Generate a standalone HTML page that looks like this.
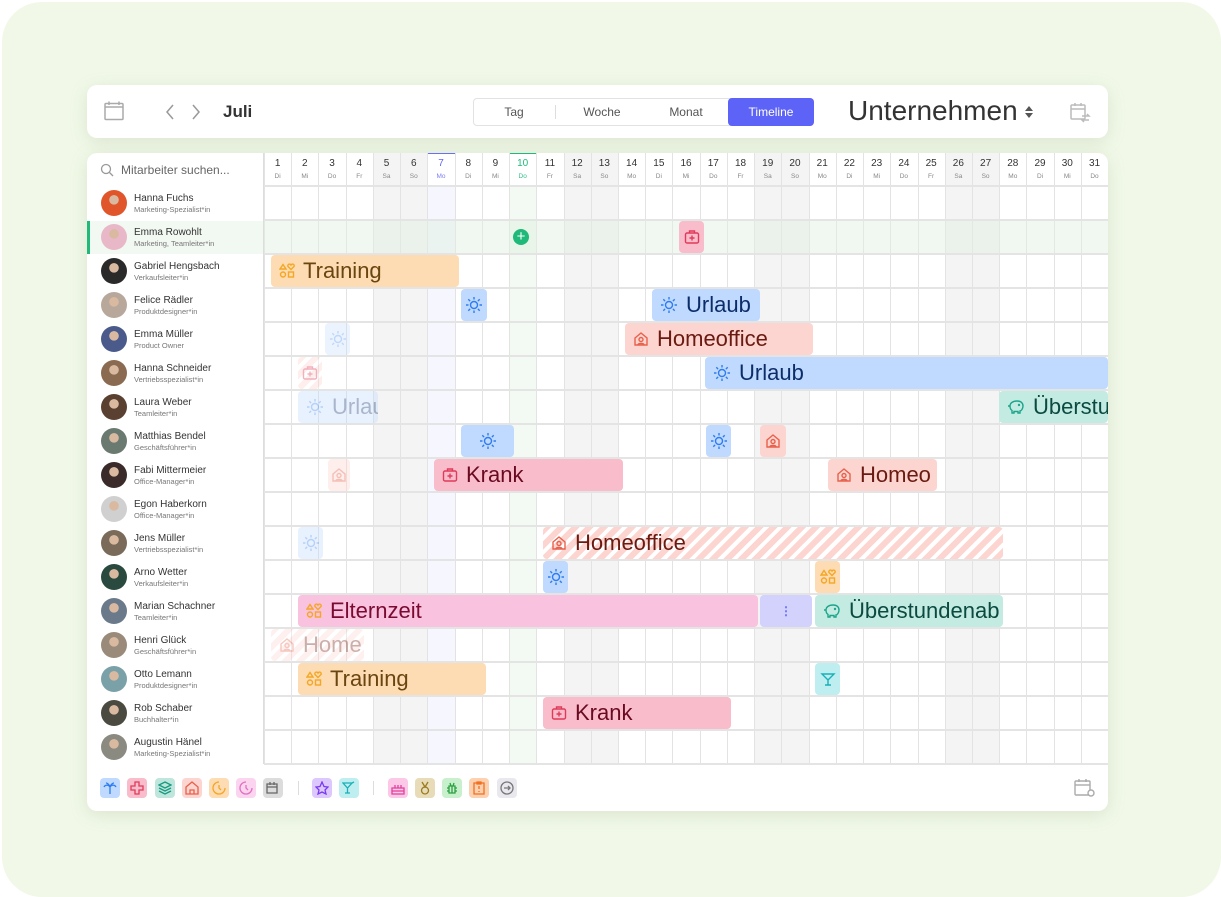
<!DOCTYPE html><html><head><meta charset="utf-8"><style>
*{margin:0;padding:0;box-sizing:border-box}
body{width:1221px;height:897px;background:#fff;font-family:"Liberation Sans",sans-serif;position:relative;overflow:hidden;color:#333}
.bgp{position:absolute;left:2px;top:2px;width:1219px;height:895px;background:#f1f8e8;border-radius:40px}
.card{position:absolute;background:#fff;border-radius:10px;box-shadow:0 4px 18px rgba(120,150,100,.18)}
.a{position:absolute}
.bar{position:absolute;border-radius:4px;overflow:hidden;white-space:nowrap;display:flex;align-items:center;font-size:22px;padding-left:8px}
.bar svg{flex:none;margin-right:8px}
.ic{position:absolute;border-radius:4px;display:flex;align-items:center;justify-content:center}
.nm{position:absolute;left:134px;font-size:10px;color:#333}
.rl{position:absolute;left:134px;font-size:7.5px;color:#777}
.av{position:absolute;left:101px;width:26px;height:26px;border-radius:50%}
.fi{position:absolute;top:778px;width:20px;height:20px;border-radius:4px;display:flex;align-items:center;justify-content:center}
</style></head><body>
<div class="bgp"></div>
<div class="card" style="left:87px;top:85px;width:1021px;height:53px"></div>
<svg class="a" style="left:103px;top:100px" width="22" height="22" viewBox="0 0 22 22" fill="none" stroke="#aaa" stroke-width="1.5"><rect x="2" y="3.5" width="18" height="16" rx="1"/><line x1="2" y1="7" x2="20" y2="7"/><line x1="6" y1="1.5" x2="6" y2="5"/><line x1="16" y1="1.5" x2="16" y2="5"/></svg>
<svg class="a" style="left:163px;top:104px" width="40" height="16" fill="none" stroke="#999" stroke-width="1.5"><path d="M10 1 L4 8 L10 15"/><path d="M30 1 L36 8 L30 15"/></svg>
<div class="a" style="left:223px;top:102px;font-size:17px;font-weight:bold;color:#333">Juli</div>
<div class="a" style="left:473px;top:98px;width:341px;height:28px;border:1px solid #e2e2e2;border-radius:4px;font-size:12px;color:#555">
<div class="a" style="left:0;width:80px;top:6px;text-align:center">Tag</div>
<div class="a" style="left:81px;top:6px;height:14px;border-left:1px solid #ddd"></div>
<div class="a" style="left:88px;width:80px;top:6px;text-align:center">Woche</div>
<div class="a" style="left:172px;width:80px;top:6px;text-align:center">Monat</div>
<div class="a" style="left:254px;top:-1px;width:86px;height:28px;background:#5e63f7;border-radius:4px;color:#fff;text-align:center;line-height:28px">Timeline</div></div>
<div class="a" style="left:848px;top:95px;font-size:28px;color:#333">Unternehmen</div>
<svg class="a" style="left:1024px;top:105px" width="10" height="14"><path d="M1 6 L5 1 L9 6Z M1 8 L5 13 L9 8Z" fill="#555"/></svg>
<svg class="a" style="left:1069px;top:101px" width="22" height="22" fill="none" stroke="#bbb" stroke-width="1.5"><rect x="2" y="4" width="14" height="14" rx="1"/><line x1="2" y1="8" x2="16" y2="8"/><line x1="6" y1="2" x2="6" y2="5"/><line x1="12" y1="2" x2="12" y2="5"/><path d="M13 15 h7 l-2 -2 M20 19 h-7 l2 2"/></svg>

<div class="card" style="left:87px;top:153px;width:1021px;height:658px"></div>
<svg class="a" style="left:100px;top:163px" width="14" height="14" fill="none" stroke="#999" stroke-width="1.3"><circle cx="6" cy="6" r="4.5"/><line x1="9.5" y1="9.5" x2="13" y2="13"/></svg>
<div class="a" style="left:121px;top:163px;font-size:12px;color:#666">Mitarbeiter suchen...</div>
<div class="a" style="left:87px;top:221px;width:177px;height:33px;background:#f2f8f2"></div>
<div class="a" style="left:87px;top:221px;width:3px;height:33px;background:#1fba7a"></div>
<div id="grid"></div>
<div id="people"></div>

<div id="bars"></div>
<div id="foot"></div>
<svg class="a" style="left:1073px;top:777px" width="24" height="22" fill="none" stroke="#aaa" stroke-width="1.4"><rect x="2" y="4" width="15" height="14" rx="1"/><line x1="2" y1="8" x2="17" y2="8"/><line x1="6" y1="2" x2="6" y2="5"/><line x1="13" y1="2" x2="13" y2="5"/><circle cx="18" cy="16" r="3" fill="#fff"/></svg>
<script>
const X0=264,W=27.23,Y0=186,RH=34;
let g='';
const wd=['Di','Mi','Do','Fr','Sa','So','Mo'];
for(let d=1;d<=31;d++){const x=X0+(d-1)*W;const w=wd[(d-1)%7];
 let bg=null;if(w=='Sa'||w=='So')bg='#f4f4f4';if(d==7)bg='#f5f6fe';if(d==10)bg='#f3f9f3';
 if(bg)g+=`<div class="a" style="left:${x}px;top:153px;width:${W}px;height:611px;background:${bg}"></div>`;
 if(d==7||d==10)g+=`<div class="a" style="left:${x}px;top:153px;width:${W}px;height:33px;background:#fff;border-top:1.5px solid ${d==7?'#6b6ff5':'#1fba7a'}"></div>`;
 g+=`<div class="a" style="left:${x}px;top:153px;width:1px;height:611px;background:#e3e3e3"></div>`;
 const c=d==7?'#5e63f7':d==10?'#1fba7a':'#333',c2=d==7?'#7b7ff7':d==10?'#2fc08a':'#888';
 g+=`<div class="a" style="left:${x}px;width:${W}px;top:158px;text-align:center;font-size:10px;color:${c}">${d}</div><div class="a" style="left:${x}px;width:${W}px;top:173px;text-align:center;font-size:6.5px;color:${c2}">${w}</div>`;}
g+=`<div class="a" style="left:264px;top:220px;width:844px;height:34px;background:rgba(225,240,225,.45)"></div>`;
for(let r=0;r<=17;r++)g+=`<div class="a" style="left:264px;top:${Y0+r*RH-1}px;width:844px;height:2px;background:#e4e4e4"></div>`;
g+=`<div class="a" style="left:263px;top:153px;width:1px;height:611px;background:#ddd"></div>`;
document.getElementById('grid').innerHTML=g;
const P=[['Hanna Fuchs','Marketing-Spezialist*in','#e0552a'],['Emma Rowohlt','Marketing, Teamleiter*in','#e8b8c8'],['Gabriel Hengsbach','Verkaufsleiter*in','#2a2a2a'],['Felice Rädler','Produktdesigner*in','#b8a89c'],['Emma Müller','Product Owner','#4a5a8a'],['Hanna Schneider','Vertriebsspezialist*in','#8a6a50'],['Laura Weber','Teamleiter*in','#5a4030'],['Matthias Bendel','Geschäftsführer*in','#6a7a70'],['Fabi Mittermeier','Office-Manager*in','#3a2a2a'],['Egon Haberkorn','Office-Manager*in','#d0d0d0'],['Jens Müller','Vertriebsspezialist*in','#7a6a5a'],['Arno Wetter','Verkaufsleiter*in','#2a4a40'],['Marian Schachner','Teamleiter*in','#6a7a8a'],['Henri Glück','Geschäftsführer*in','#9a8a7a'],['Otto Lemann','Produktdesigner*in','#7aa0a8'],['Rob Schaber','Buchhalter*in','#4a4a40'],['Augustin Hänel','Marketing-Spezialist*in','#8a8a80']];
let p='';P.forEach((q,i)=>{const y=Y0+i*RH;p+=`<div class="av" style="top:${y+4}px;background:radial-gradient(circle at 50% 38%,#d9b9a0 0 22%,${q[2]} 24%)"></div><div class="nm" style="top:${y+7}px">${q[0]}</div><div class="rl" style="top:${y+19}px">${q[1]}</div>`});
document.getElementById('people').innerHTML=p;
const ic={
sun:c=>`<svg width="18" height="18" viewBox="0 0 18 18" fill="none" stroke="${c}" stroke-width="1.4"><circle cx="9" cy="9" r="3.5"/><path d="M9 1v2.5M9 14.5V17M1 9h2.5M14.5 9H17M3.3 3.3l1.8 1.8M12.9 12.9l1.8 1.8M3.3 14.7l1.8-1.8M12.9 5.1l1.8-1.8"/></svg>`,
home:c=>`<svg width="16" height="16" viewBox="0 0 16 16" fill="none" stroke="${c}" stroke-width="1.4"><path d="M2 7 L8 2 L14 7 V14 H2Z"/><circle cx="8" cy="8.5" r="2"/><path d="M5 14c0-2 6-2 6 0"/></svg>`,
tr:c=>`<svg width="16" height="16" viewBox="0 0 16 16" fill="none" stroke="${c}" stroke-width="1.4"><path d="M4 1.5L7 6H1Z"/><path d="M12 6.5l-3-3a1.5 1.5 0 0 1 3-1.5a1.5 1.5 0 0 1 3 1.5Z"/><circle cx="4" cy="11.5" r="2.5"/><rect x="9.5" y="9" width="5" height="5"/></svg>`,
med:c=>`<svg width="16" height="16" viewBox="0 0 16 16" fill="none" stroke="${c}" stroke-width="1.4"><rect x="1.5" y="4" width="13" height="10" rx="1.5"/><path d="M5.5 4V2h5v2M8 6.5v5M5.5 9h5"/></svg>`,
pig:c=>`<svg width="18" height="16" viewBox="0 0 18 16" fill="none" stroke="${c}" stroke-width="1.4"><path d="M3 7c0-3 3-5 7-5s6 2 6 5-2 5-3 5v2h-2v-1.5H7V14H5v-2.5C3.5 10.5 3 9 3 7Z"/><path d="M3 7H1"/><circle cx="12" cy="6" r=".5"/></svg>`,
cock:c=>`<svg width="16" height="16" viewBox="0 0 16 16" fill="none" stroke="${c}" stroke-width="1.4"><path d="M2 3h12L8 9Z M8 9v5M5 14h6"/></svg>`};
const B=[
[1,679,704,'#f8bccb','',"med",'','#e03a5a'],
[2,271,459,'#fddcb3','#6b4510','tr','Training','#f5a623'],
[3,461,487,'#bfdafe','','sun','','#2f7cf0'],
[3,652,760,'#bfdafe','#0d2d6a','sun','Urlaub','#2f7cf0'],
[4,325,350,'#bfdafe','','sun','','#2f7cf0',.3],
[4,625,813,'#fdd5d0','#6a1a10','home','Homeoffice','#e8604a'],
[5,298,322,'#fdd5d0','','med','','#e03a5a',.4,1],
[5,705,1108,'#bfdafe','#0d2d6a','sun','Urlaub','#2f7cf0'],
[6,298,378,'#bfdafe','#0d2d6a','sun','Urlau','#2f7cf0',.35],
[6,999,1108,'#c4ebe2','#0a4a40','pig','Überstu','#1aa58a'],
[7,461,514,'#bfdafe','','sun','','#2f7cf0'],
[7,706,731,'#bfdafe','','sun','','#2f7cf0'],
[7,760,786,'#fdd5d0','','home','','#e8604a'],
[8,328,350,'#fdd5d0','','home','','#e8604a',.4],
[8,434,623,'#f8bccb','#6a0a20','med','Krank','#e03a5a'],
[8,828,937,'#fdd5d0','#6a1a10','home','Homeo','#e8604a'],
[10,298,323,'#bfdafe','','sun','','#2f7cf0',.35],
[10,543,1003,'#fdd5d0','#6a1a10','home','Homeoffice','#e8604a',1,1],
[11,543,568,'#bfdafe','','sun','','#2f7cf0'],
[11,815,840,'#fddcb3','','tr','','#f5a623'],
[12,298,758,'#f9c3df','#7a0a30','tr','Elternzeit','#f5a623'],
[12,760,812,'#d2d2fc','','','','#6b6ff5'],
[12,815,1003,'#c4ebe2','#0a4a40','pig','Überstundenab','#1aa58a'],
[13,271,364,'#fdd5d0','#6a1a10','home','Home','#e8604a',.35,1],
[14,298,486,'#fddcb3','#6b4510','tr','Training','#f5a623'],
[14,815,840,'#bfeef0','','cock','','#1ab0b8'],
[15,543,731,'#f8bccb','#6a0a20','med','Krank','#e03a5a']];
let b='';B.forEach(v=>{const [r,x1,x2,bg,fg,icn,t,icc,op,st]=v;const y=Y0+r*RH+1;
 const bgs=st?`repeating-linear-gradient(135deg,${bg} 0 6px,#fff0 6px 10px),#fff`:bg;
 let inner=icn?ic[icn](icc):`<span style="color:#6b6ff5;font-size:12px;font-weight:bold">⋮</span>`;
 if(t) b+=`<div class="bar" style="left:${x1}px;top:${y}px;width:${x2-x1}px;height:32px;background:${bgs};color:${fg};opacity:${op||1}">${inner}<span>${t}</span></div>`;
 else b+=`<div class="ic" style="left:${x1}px;top:${y}px;width:${x2-x1}px;height:32px;background:${bgs};opacity:${op||1}">${inner}</div>`;});
b+=`<div class="a" style="left:513px;top:229px;width:16px;height:16px;border-radius:50%;background:#1fba7a;color:#fff;font-size:15px;line-height:16px;text-align:center">+</div>`;
document.getElementById('bars').innerHTML=b;
const paths={
palm:'M7 13V6M7 6C5 3 2 4 1 6M7 6C9 3 12 4 13 6M7 6C6 3 4 2 3 2M7 6C8 3 10 2 11 2',
plus:'M5 1h4v4h4v4H9v4H5V9H1V5h4Z',
layers:'M7 1L13 4L7 7L1 4Z M1 7L7 10L13 7 M1 10L7 13L13 10',
home:'M1 6L7 1L13 6V13H1Z M5 13V9h4v4',
clock:'M7 1a6 6 0 1 0 6 6 M7 4v3l2 2',
cal:'M1 3h10v9H1Z M1 6h10 M4 1v3 M8 1v3',
star:'M7 1L9 5.5L13 6L10 9L11 13L7 11L3 13L4 9L1 6L5 5.5Z',
cock:'M1 2h9L5.5 7Z M5.5 7v5M3 12h5 M10 2l2-1',
cake:'M1 7h12v6H1Z M1 10h12 M4 4v3M7 4v3M10 4v3',
medal:'M4 1l3 5l3-5 M7 13a3.5 3.5 0 1 0 0-7a3.5 3.5 0 0 0 0 7',
bug:'M4 5h6v7H4Z M7 5V12 M2 7h2M10 7h2M2 10h2M10 10h2 M5 2l1 3M9 2l-1 3',
clip:'M2 2h10v11H2Z M5 1h4v2H5Z M7 5v3M7 10v1',
arrow:'M7 1a6 6 0 1 1 0 12a6 6 0 0 1 0-12 M4 7h6M8 5l2 2l-2 2'};
const F=[[100,'#bfdafe','#2f7cf0','palm'],[127,'#f8bccb','#e03a5a','plus'],[155,'#bfe6dc','#1a9a80','layers'],[182,'#fdd5d0','#e8604a','home'],[209,'#fddcb3','#f5a623','clock'],[236,'#fbd5ef','#e070c0','clock'],[263,'#dcdcdc','#666','cal'],[312,'#dcc8fc','#7a3af0','star'],[339,'#bfeef0','#1ab0b8','cock'],[388,'#fcc8e8','#e0409a','cake'],[415,'#e8dcb8','#9a7a20','medal'],[442,'#c8f0cc','#2aa040','bug'],[469,'#fdd0b0','#f07020','clip'],[497,'#e8e8ee','#777','arrow']];
let f='';F.forEach(q=>{f+=`<div class="fi" style="left:${q[0]}px;background:${q[1]}"><svg width="14" height="14" viewBox="0 0 14 14" fill="none" stroke="${q[2]}" stroke-width="1.3"><path d="${paths[q[3]]}"/></svg></div>`});
f+=`<div class="a" style="left:298px;top:781px;width:1px;height:14px;background:#ddd"></div><div class="a" style="left:373px;top:781px;width:1px;height:14px;background:#ddd"></div>`;
document.getElementById('foot').innerHTML=f;
</script>
</body></html>
